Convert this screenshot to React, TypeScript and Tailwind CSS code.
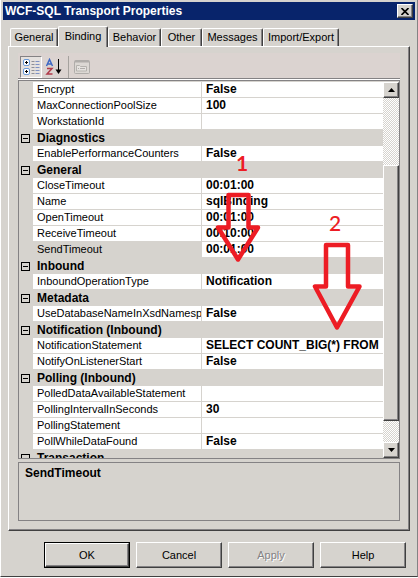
import { useState } from "react";

type Row = { name: string; value?: string; category?: boolean };

const rows: Row[] = [
  { name: "Encrypt", value: "False" },
  { name: "MaxConnectionPoolSize", value: "100" },
  { name: "WorkstationId", value: "" },
  { name: "Diagnostics", category: true },
  { name: "EnablePerformanceCounters", value: "False" },
  { name: "General", category: true },
  { name: "CloseTimeout", value: "00:01:00" },
  { name: "Name", value: "sqlBinding" },
  { name: "OpenTimeout", value: "00:01:00" },
  { name: "ReceiveTimeout", value: "00:10:00" },
  { name: "SendTimeout", value: "00:01:00" },
  { name: "Inbound", category: true },
  { name: "InboundOperationType", value: "Notification" },
  { name: "Metadata", category: true },
  { name: "UseDatabaseNameInXsdNamespace", value: "False" },
  { name: "Notification (Inbound)", category: true },
  { name: "NotificationStatement", value: "SELECT COUNT_BIG(*) FROM" },
  { name: "NotifyOnListenerStart", value: "False" },
  { name: "Polling (Inbound)", category: true },
  { name: "PolledDataAvailableStatement", value: "" },
  { name: "PollingIntervalInSeconds", value: "30" },
  { name: "PollingStatement", value: "" },
  { name: "PollWhileDataFound", value: "False" },
  { name: "Transaction", category: true },
];

const tabs = [
  { label: "General", width: "w-[48px]" },
  { label: "Binding", width: "w-[50px]" },
  { label: "Behavior", width: "w-[53px]" },
  { label: "Other", width: "w-[41px]" },
  { label: "Messages", width: "w-[61px]" },
  { label: "Import/Export", width: "w-[76px]" },
];

const raised =
  "border border-t-white border-l-white border-r-[#404040] border-b-[#404040] bg-[#d6d3ce] shadow-[inset_-1px_-1px_0_#848284]";
const track =
  "bg-[repeating-conic-gradient(#ffffff_0_25%,#d6d3ce_0_50%)] bg-[length:2px_2px]";

function Tabs() {
  const [active, setActive] = useState("Binding");
  return (
    <div role="tablist" className="flex h-5 items-end pl-0.5">
      {tabs.map((tab) => {
        const selected = tab.label === active;
        return (
          <button
            key={tab.label}
            type="button"
            role="tab"
            aria-selected={selected}
            onClick={() => setActive(tab.label)}
            className={`${tab.width} shrink-0 rounded-t-[2px] border border-b-0 border-t-white border-l-white border-r-[#404040] bg-[#d6d3ce] text-center whitespace-nowrap shadow-[inset_-1px_0_0_#848284] ${
              selected ? "relative z-10 -mb-px h-[21px] pb-0.5" : "h-[18px]"
            }`}
          >
            {tab.label}
          </button>
        );
      })}
    </div>
  );
}

function Toolbar() {
  return (
    <div className="flex h-[26px] items-center border-b border-[#848284] bg-[#dbd3d0] pt-0.5 pl-0.5">
      <button
        type="button"
        aria-label="Categorized"
        aria-pressed="true"
        className="flex h-[22px] w-[22px] items-center justify-center border border-t-[#848284] border-l-[#848284] border-r-white border-b-white bg-[#e5e1de]"
      >
        <svg width="18" height="18" viewBox="0 0 18 18" aria-hidden="true">
          <rect x="1.500" y="1.500" width="6" height="6" rx="1.500" fill="#fff" stroke="#6a9ad8" />
          <rect x="1.500" y="10.500" width="6" height="6" rx="1.500" fill="#fff" stroke="#6a9ad8" />
          <path d="M3 4.500h3M4.500 3v3M3 13.500h3M4.500 12v3" stroke="#000" />
          <path d="M9.500 3.500h3M9.500 6.500h3M9.500 9.500h3M9.500 12.500h3M9.500 15.500h3" stroke="#8f8f96" />
          <path d="M13.500 3.500h4M13.500 6.500h4M13.500 9.500h4M13.500 12.500h4M13.500 15.500h4" stroke="#7f92c4" />
        </svg>
      </button>
      <button type="button" aria-label="Alphabetical" className="flex h-[22px] w-[24px] items-center justify-center">
        <svg width="18" height="18" viewBox="0 0 18 18" aria-hidden="true">
          <path d="M1.500 8 4.500 1.500 7.500 8M2.500 6h4" fill="none" stroke="#3e68c4" strokeWidth="1.500" />
          <path d="M2 10.500h5L2 16h5.500" fill="none" stroke="#b03a4a" strokeWidth="1.500" />
          <path d="M13.500 1v13" stroke="#000" />
          <path d="M10.500 11.500h6l-3 4.500z" fill="#000" />
        </svg>
      </button>
      <div className="mr-1 ml-0.5 h-[22px] w-px bg-[#a5a29e]" />
      <button type="button" disabled aria-label="Property Pages" className="flex h-[22px] w-[18px] items-center justify-center">
        <svg width="16" height="16" viewBox="0 0 16 16" aria-hidden="true">
          <rect x=".5" y="1.500" width="15" height="13" rx="1" fill="#dcd8d4" stroke="#b0adaa" />
          <path d="M1 2.500h14" stroke="#b0adaa" strokeWidth="2" />
          <path d="M2.500 6.500h3l1 1h6v4.500h-10z" fill="#e6e3e0" stroke="#b5b2ae" />
          <path d="M4 9.500h1M6 9.500h5" stroke="#b0adaa" />
        </svg>
      </button>
    </div>
  );
}

function PropertyGrid() {
  return (
    <div className="min-w-0 flex-1">
      <table className="w-full table-fixed border-separate border-spacing-0">
        <colgroup>
          <col className="w-[14px]" />
          <col className="w-[168px]" />
          <col />
        </colgroup>
        <tbody>
          {rows.map((row) =>
            row.category ? (
              <tr key={row.name} className="h-4">
                <td className="p-0">
                  <button
                    type="button"
                    aria-label={`Collapse ${row.name}`}
                    className="ml-0.5 flex h-[9px] w-[9px] items-center justify-center border border-black"
                  >
                    <span className="h-px w-[5px] bg-black" />
                  </button>
                </td>
                <th colSpan={2} className="p-0 pl-1 text-left text-[12px] leading-4 font-bold">
                  {row.name}
                </th>
              </tr>
            ) : (
              <tr key={row.name} className="h-4">
                <td className="p-0" />
                <th
                  className={`overflow-hidden border-b border-[#d6d3ce] p-0 pl-1 text-left leading-[15px] font-normal whitespace-nowrap ${
                    row.name === "SendTimeout" ? "bg-[#d6d3ce]" : "bg-white"
                  }`}
                >
                  {row.name}
                </th>
                <td className="border-b border-l border-[#d6d3ce] bg-white p-0 pl-1">
                  <input
                    aria-label={row.name}
                    defaultValue={row.value}
                    className="block h-[15px] w-full bg-transparent text-[12px] leading-[15px] font-bold outline-none"
                  />
                </td>
              </tr>
            ),
          )}
        </tbody>
      </table>
    </div>
  );
}

function ScrollBar() {
  return (
    <div className={`flex w-4 shrink-0 flex-col ${track}`}>
      <button type="button" aria-label="Scroll up" className={`flex h-4 items-center justify-center ${raised}`}>
        <svg width="7" height="4" viewBox="0 0 7 4" aria-hidden="true">
          <path d="M0 4 3.500 0 7 4z" />
        </svg>
      </button>
      <div className="h-[67px]" />
      <div className={`h-[256px] ${raised}`} />
      <div className="flex-1" />
      <button type="button" aria-label="Scroll down" className={`flex h-4 items-center justify-center ${raised}`}>
        <svg width="7" height="4" viewBox="0 0 7 4" aria-hidden="true">
          <path d="M0 0h7L3.500 4z" />
        </svg>
      </button>
    </div>
  );
}

function Annotations() {
  return (
    <div className="pointer-events-none absolute inset-0 font-[Lato,sans-serif] text-[21px] leading-6 text-[#ed1c24]">
      <span className="absolute top-[151px] left-[235px] font-bold">1</span>
      <span className="absolute top-[211px] left-[328px] font-medium">2</span>
      <svg className="absolute inset-0" width="418" height="578" viewBox="0 0 418 578" aria-hidden="true">
        <g fill="none" stroke="#ed1c24" strokeWidth="4.500" strokeLinejoin="round">
          <path d="M227.500 195h20V227.500h9.500L237 259.500 217 227.500H227.500z" />
          <path d="M325 245h22V286.500H358.500L336 327.500 314 286.500h11z" />
        </g>
      </svg>
    </div>
  );
}

export default function App() {
  return (
    <div className="relative w-full border-r border-b border-l border-l-white border-r-[#848284] border-b-[#404040] bg-[#d6d3ce] px-0.5 pt-0.5 pb-2 font-['Liberation_Sans',Arial,sans-serif] text-[11px] text-black">
      <header className="flex h-[18px] items-center justify-between bg-[#08246b] pr-0.5 pl-0.5 text-white">
        <h1 className="text-[12px] leading-4 font-bold">WCF-SQL Transport Properties</h1>
        <button type="button" aria-label="Close" className={`flex h-[14px] w-4 items-center justify-center ${raised}`}>
          <svg width="8" height="7" viewBox="0 0 8 7" aria-hidden="true">
            <path d="m.5 0 7 7m0-7-7 7" stroke="#000" strokeWidth="1.600" />
          </svg>
        </button>
      </header>

      <main className="px-[5px] pt-1.5">
        <Tabs />
        <section className="border border-t-white border-l-white border-r-[#404040] border-b-[#404040] px-[9px] pt-1.5 pb-[9px] shadow-[inset_-1px_-1px_0_#848284]">
          <Toolbar />
          <div className="border-t border-white">
            <div className="flex h-[379px] overflow-hidden border border-[#848284] pt-px">
              <PropertyGrid />
              <ScrollBar />
            </div>
          </div>
          <div className="mt-[3px] h-[59px] border border-[#848284] px-1.5 pt-0.5 text-[12px] leading-4 font-bold">
            SendTimeout
          </div>
        </section>
      </main>

      <footer className="flex justify-end gap-1.5 pt-[11px] pr-[9px]">
        <button type="button" className="h-[26px] w-[86px] border border-black">
          <span className={`flex h-full items-center justify-center ${raised}`}>OK</span>
        </button>
        <button type="button" className={`h-[26px] w-[86px] ${raised}`}>
          Cancel
        </button>
        <button type="button" disabled className={`h-[26px] w-[86px] text-[#848284] [text-shadow:1px_1px_0_#fff] ${raised}`}>
          Apply
        </button>
        <button type="button" className={`h-[26px] w-[86px] ${raised}`}>
          Help
        </button>
      </footer>
      <Annotations />
    </div>
  );
}
